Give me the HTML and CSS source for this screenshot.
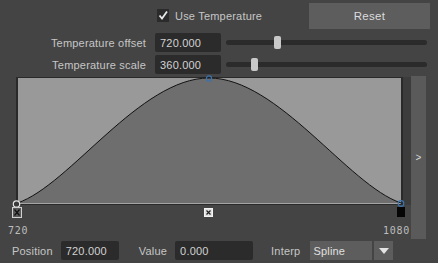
FILE: index.html
```html
<!DOCTYPE html>
<html lang="en">
  <head>
    <meta charset="UTF-8" />
    <title>Temperature</title>
    <link rel="stylesheet" href="styles.css">
  </head>
  <body>
    <div class="top-row">
      <label class="check">
        <span class="check-box">
          <svg width="12" height="13" viewBox="0 0 12 13"><polyline points="2.5,6.5 5,9.5 10,2.5" fill="none" stroke="#e8e8e8" stroke-width="1.8"/></svg>
        </span>
        Use Temperature
      </label>
      <button class="reset-btn">Reset</button>
    </div>

    <div class="params">
      <div class="param-row">
        <span class="param-label">Temperature offset</span>
        <span class="field param-field">720.000</span>
        <div class="slider"><div class="track"></div><div class="thumb" style="left: 48px"></div></div>
      </div>
      <div class="param-row">
        <span class="param-label">Temperature scale</span>
        <span class="field param-field">360.000</span>
        <div class="slider"><div class="track"></div><div class="thumb" style="left: 25px"></div></div>
      </div>
    </div>

    <div class="graph-section">
      <div class="graph-main">
        <svg class="graph" width="411" height="144" viewBox="0 0 411 144">
          <rect x="16" y="1" width="387" height="128" fill="#2a2a2a"/>
          <rect x="403" y="1" width="8" height="128" fill="#3c3c3c"/>
          <rect x="18" y="2" width="383" height="126" fill="#999999"/>
          <path d="M17.5,127 C70,109 140,2 209,2 C278,2 348,109 401,127 Z" fill="#6e6e6e"/>
          <rect x="18" y="127" width="383" height="1" fill="#a4a4a4"/>
          <path d="M17.5,127 C70,109 140,2 209,2 C278,2 348,109 401,127" fill="none" stroke="#111" stroke-width="1"/>
          <circle cx="209" cy="2.5" r="2.6" fill="none" stroke="#3b73ad" stroke-width="1.2"/>
          <circle cx="401" cy="127.5" r="2.8" fill="none" stroke="#3b73ad" stroke-width="1.2"/>
          <circle cx="16.5" cy="128" r="3.2" fill="#3a3a3a" stroke="#e6e6e6" stroke-width="1.2"/>

          <rect x="12.5" y="131.5" width="9" height="10" fill="#5a5a5a" stroke="#d0d0d0"/>
          <path d="M14.5,133.5 L19.5,139.5 M19.5,133.5 L14.5,139.5" stroke="#111" stroke-width="1.2"/>
          <rect x="204.5" y="132.5" width="8" height="8" fill="#e0e0e0" stroke="#f4f4f4"/>
          <path d="M206.5,134.5 L210.5,138.5 M210.5,134.5 L206.5,138.5" stroke="#222" stroke-width="1.2"/>
          <rect x="397" y="131" width="8" height="10" fill="#050505"/>
        </svg>
        <div class="axis-labels">
          <span>720</span>
          <span>1080</span>
        </div>
      </div>
      <button class="side-btn">&gt;</button>
    </div>

    <div class="bottom-row">
      <span class="bottom-label">Position</span>
      <span class="field pos-field">720.000</span>
      <span class="bottom-label value-label">Value</span>
      <span class="field value-field">0.000</span>
      <span class="bottom-label interp-label">Interp</span>
      <div class="dropdown">
        <span class="dropdown-text">Spline</span>
        <span class="dropdown-arrow">
          <svg width="10" height="6" viewBox="0 0 10 6"><polygon points="0,0 10,0 5,6" fill="#e4e4e4"/></svg>
        </span>
      </div>
    </div>
  </body>
</html>
```

FILE: styles.css
```css
body {
  margin: 0;
  width: 438px;
  height: 263px;
  overflow: hidden;
  background-color: #444444;
  font-family: "Liberation Sans", Arial, sans-serif;
  font-size: 11px;
  letter-spacing: 0.2px;
  color: #c6c6c6;
}

.top-row {
  height: 31px;
  display: flex;
  align-items: center;
  padding-left: 157px;
}

.check {
  display: flex;
  align-items: center;
  gap: 6px;
}

.check-box {
  width: 12px;
  height: 13px;
  background: #2b2b2b;
  display: flex;
}

.reset-btn {
  margin-left: auto;
  margin-right: 8px;
  width: 121px;
  height: 26px;
  border: none;
  padding: 0;
  background: #5d5d5d;
  color: #dcdcdc;
  font-family: inherit;
  font-size: 11.5px;
  letter-spacing: 0.3px;
}

.params {
  margin-top: 2px;
  display: flex;
  flex-direction: column;
  gap: 3px;
}

.param-row {
  height: 19px;
  display: flex;
  align-items: center;
}

.param-label {
  width: 146px;
  text-align: right;
  margin-right: 9px;
}

.field {
  height: 19px;
  box-sizing: border-box;
  background: #2b2b2b;
  border-radius: 2px;
  display: flex;
  align-items: center;
  padding-left: 5px;
  color: #d2d2d2;
}

.param-field {
  width: 66px;
}

.slider {
  position: relative;
  margin-left: 5px;
  width: 201px;
  height: 13px;
  display: flex;
  align-items: center;
}

.track {
  width: 100%;
  height: 5px;
  background: #2b2b2b;
  border-radius: 3px;
}

.thumb {
  position: absolute;
  top: 0;
  width: 7px;
  height: 13px;
  background: #c8c8c8;
  border-radius: 2px;
}

.graph-section {
  margin-top: 2px;
  height: 164px;
  display: flex;
}

.graph-main {
  width: 411px;
  display: flex;
  flex-direction: column;
}

.graph {
  display: block;
  overflow: visible;
}

.axis-labels {
  height: 20px;
  display: flex;
  justify-content: space-between;
  align-items: center;
  padding: 0 1px 0 8px;
  font-family: "DejaVu Sans Mono", monospace;
  font-size: 10px;
  letter-spacing: 0.7px;
  color: #bdbdbd;
}

.side-btn {
  width: 15px;
  height: 163px;
  border: none;
  padding: 0;
  background: #5a5a5a;
  color: #d8d8d8;
  font-family: inherit;
  font-size: 10px;
}

.bottom-row {
  margin-top: 1px;
  height: 19px;
  display: flex;
  align-items: center;
  padding-left: 12px;
}

.bottom-label {
  margin-right: 8px;
}

.pos-field {
  width: 58px;
}

.value-label {
  margin-left: 20px;
}

.value-field {
  width: 78px;
}

.interp-label {
  margin-left: 18px;
  margin-right: 10px;
}

.dropdown {
  height: 19px;
  display: flex;
  gap: 2px;
}

.dropdown-text {
  width: 59px;
  background: #5d5d5d;
  display: flex;
  align-items: center;
  padding-left: 3px;
  color: #e0e0e0;
}

.dropdown-arrow {
  width: 19px;
  background: #5d5d5d;
  display: flex;
  align-items: center;
  justify-content: center;
}
```
